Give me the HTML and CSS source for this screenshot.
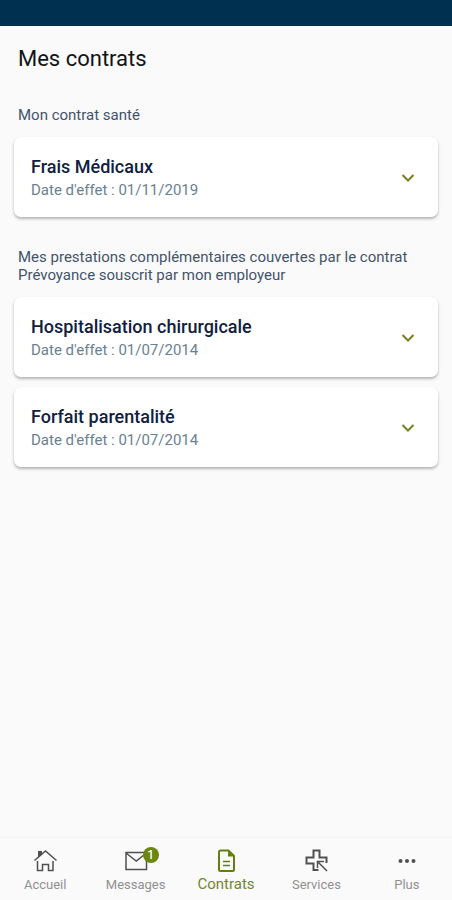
FILE: index.html
```html
<!DOCTYPE html>
<html lang="fr">
<head>
<meta charset="utf-8">
<meta name="viewport" content="width=device-width, initial-scale=1">
<title>Mes contrats</title>
<link rel="stylesheet" href="styles.css">
</head>
<body>
<div class="status-bar"></div>
<main class="content">
  <h1 class="title">Mes contrats</h1>
  <section class="section">
    <h2 class="section-title">Mon contrat santé</h2>
    <button class="card" type="button">
      <span class="card-text"><span class="card-name">Frais Médicaux</span><span class="card-date">Date d'effet : 01/11/2019</span></span>
      <svg class="chevron" viewBox="0 0 14 10"><path d="M1.500 2l5.500 5.500L12.500 2"/></svg>
    </button>
  </section>
  <section class="section">
    <h2 class="section-title">Mes prestations complémentaires couvertes par le contrat Prévoyance souscrit par mon employeur</h2>
    <button class="card" type="button">
      <span class="card-text"><span class="card-name">Hospitalisation chirurgicale</span><span class="card-date">Date d'effet : 01/07/2014</span></span>
      <svg class="chevron" viewBox="0 0 14 10"><path d="M1.500 2l5.500 5.500L12.500 2"/></svg>
    </button>
    <button class="card" type="button">
      <span class="card-text"><span class="card-name">Forfait parentalité</span><span class="card-date">Date d'effet : 01/07/2014</span></span>
      <svg class="chevron" viewBox="0 0 14 10"><path d="M1.500 2l5.500 5.500L12.500 2"/></svg>
    </button>
  </section>
</main>
<nav class="tabs">
  <a class="tab" href="#accueil">
    <svg class="tab-icon" viewBox="0 0 24 24"><path d="M1.500 11.500L12.500 2l11 9.500M4.500 12v9.500h5v-6h6v6h4.500V12"/><path class="solid" d="M5 2h4v3.500L5 9z"/></svg>
    <span>Accueil</span>
  </a>
  <a class="tab" href="#messages">
    <span class="icon-wrap">
      <svg class="tab-icon" viewBox="0 0 24 24"><path d="M2 3.500h20.500v17H2zM2 4l10.250 8L22.500 4"/></svg>
      <span class="badge">1</span>
    </span>
    <span>Messages</span>
  </a>
  <a class="tab active" href="#contrats" aria-current="page">
    <svg class="tab-icon" viewBox="0 0 24 24"><path class="thick" d="M6.500 1.500h8l5.500 5.500v13.500a1.500 1.500 0 0 1-1.500 1.500h-12a1.500 1.500 0 0 1-1.500-1.500V3a1.500 1.500 0 0 1 1.500-1.500z"/><path class="solid" d="M14 1.500l6 6h-6z"/><path class="lines" d="M9 12.500h7M9 16.500h7"/></svg>
    <span>Contrats</span>
  </a>
  <a class="tab" href="#services">
    <svg class="tab-icon" viewBox="0 0 24 24"><path class="thick" d="M22.500 14V8.500h-7V1.500h-6v7h-7v6h7v6.500h5"/><path d="M13.500 19v-6.500h6.500M14 13l9 9"/></svg>
    <span>Services</span>
  </a>
  <a class="tab" href="#plus">
    <svg class="tab-icon" viewBox="0 0 24 24"><circle class="dot" cx="5.500" cy="12" r="2"/><circle class="dot" cx="12" cy="12" r="2"/><circle class="dot" cx="18.500" cy="12" r="2"/></svg>
    <span>Plus</span>
  </a>
</nav>
</body>
</html>
```
FILE: styles.css
```css
* { box-sizing: border-box; }
body {
  margin: 0;
  min-height: 100vh;
  display: flex;
  flex-direction: column;
  background: #fafafa;
  font-family: Roboto, "Liberation Sans", sans-serif;
  color: #10284a;
}
.status-bar { height: 26px; background: #00304f; }
.content { flex: 1; padding: 19px 14px; }
.title {
  margin: 0 4px 33px;
  font-size: 22px;
  line-height: 28px;
  font-weight: 400;
  color: #111418;
}
.section { margin-bottom: 31px; }
.section-title {
  margin: 0 4px 13px;
  font-size: 15px;
  line-height: 18px;
  font-weight: 400;
  color: #43546a;
}
.card {
  width: 100%;
  min-height: 80px;
  margin: 0 0 10px;
  padding: 19px 23px 17px 17px;
  display: flex;
  align-items: center;
  justify-content: space-between;
  border: 0;
  border-radius: 7px;
  background: #fff;
  box-shadow: 0 2px 3px rgba(0, 0, 0, 0.28);
  font-family: inherit;
  text-align: left;
}
.card:last-child { margin-bottom: 0; }
.card-text { display: flex; flex-direction: column; gap: 2px; }
.card-name { font-size: 18px; line-height: 22px; font-weight: 500; color: #10203f; }
.card-date { font-size: 15px; line-height: 20px; color: #6b7f90; }
.chevron {
  width: 14px;
  height: 10px;
  fill: none;
  stroke: #6f8420;
  stroke-width: 2;
}
.tabs {
  display: flex;
  height: 63px;
  padding-top: 11px;
  border-top: 1px solid #f3f3f3;
}
.tab {
  flex: 1;
  display: flex;
  flex-direction: column;
  align-items: center;
  gap: 4px;
  font-size: 13px;
  line-height: 16px;
  color: #919191;
  text-decoration: none;
}
.icon-wrap { position: relative; height: 24px; }
.tab-icon {
  display: block;
  width: 24px;
  height: 24px;
  fill: none;
  stroke: #505050;
  stroke-width: 1.5;
}
.solid { fill: #505050; stroke: none; }
.thick { stroke-width: 2; }
.dot { fill: #505050; stroke: none; }
.badge {
  position: absolute;
  top: -2px;
  right: -11px;
  width: 16px;
  height: 16px;
  border-radius: 50%;
  background: #6c8612;
  color: #fff;
  font-size: 12px;
  line-height: 16px;
  font-weight: 500;
  text-align: center;
}
.active { gap: 3px; font-size: 15px; color: #71872f; }
.active .tab-icon { stroke: #64800c; }
.active .solid { fill: #64800c; }
```
